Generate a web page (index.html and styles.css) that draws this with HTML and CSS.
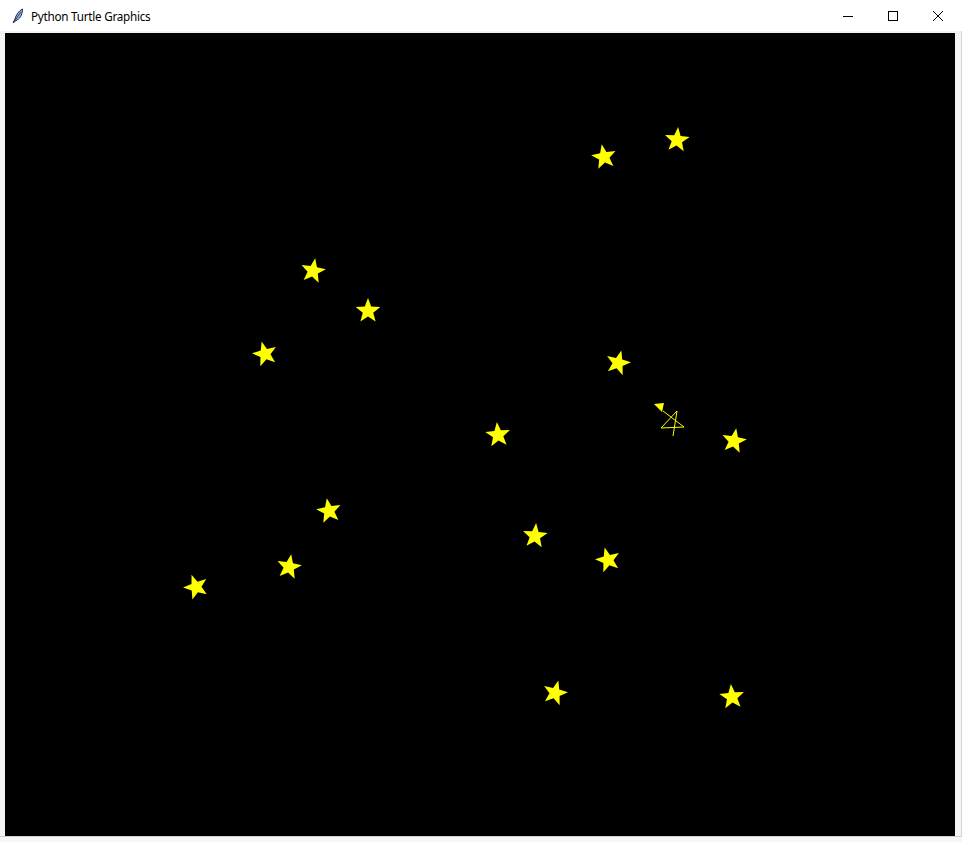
FILE: index.html
```html
<!DOCTYPE html>
<html>
<head>
<meta charset="utf-8">
<link rel="stylesheet" href="styles.css">
</head>
<body>
<div class="window">
  <div class="titlebar">
    <svg class="app-icon" width="12" height="16" viewBox="0 0 12 16">
      <path d="M1 15 L3 11 C4 7 6.5 3 10.5 1 C10.5 5 9 10 5 12 L2 14 Z" fill="#8fb4e0" stroke="#1b2a44" stroke-width="1"/>
      <path d="M1.5 14.5 L9 4" stroke="#1b2a44" stroke-width="0.8" fill="none"/>
    </svg>
    <span class="title">Python Turtle Graphics</span>
    <div class="controls">
      <div class="ctl">
        <svg width="12" height="12" viewBox="0 0 12 12"><path d="M1 6.5 H11" stroke="#000" stroke-width="1"/></svg>
      </div>
      <div class="ctl">
        <svg width="12" height="12" viewBox="0 0 12 12"><rect x="1.5" y="1.5" width="9" height="9" fill="none" stroke="#000" stroke-width="1"/></svg>
      </div>
      <div class="ctl">
        <svg width="12" height="12" viewBox="0 0 12 12"><path d="M1 1 L11 11 M11 1 L1 11" stroke="#000" stroke-width="1"/></svg>
      </div>
    </div>
  </div>
  <div class="client">
    <svg class="canvas" width="950" height="803" viewBox="5 33 950 803">
      <defs>
        <polygon id="star" points="0,-13 3.2,-4.4 12.36,-4.02 5.2,1.7 7.64,10.52 0,5.5 -7.64,10.52 -5.2,1.7 -12.36,-4.02 -3.2,-4.4" fill="#ffff00"/>
      </defs>
      <rect x="5" y="33" width="950" height="803" fill="#000"/>
      <use href="#star" transform="translate(604,157) rotate(-10)"/>
      <use href="#star" transform="translate(677,140) rotate(5)"/>
      <use href="#star" transform="translate(313,271) rotate(10)"/>
      <use href="#star" transform="translate(368,311) rotate(0)"/>
      <use href="#star" transform="translate(265,354) rotate(-15)"/>
      <use href="#star" transform="translate(618,363) rotate(15)"/>
      <use href="#star" transform="translate(498,435) rotate(-5)"/>
      <use href="#star" transform="translate(734,441) rotate(10)"/>
      <use href="#star" transform="translate(329,511) rotate(-10)"/>
      <use href="#star" transform="translate(535,536) rotate(5)"/>
      <use href="#star" transform="translate(608,560) rotate(-15)"/>
      <use href="#star" transform="translate(289,567) rotate(10)"/>
      <use href="#star" transform="translate(196,587) rotate(-20)"/>
      <use href="#star" transform="translate(555,693) rotate(15)"/>
      <use href="#star" transform="translate(732,697) rotate(-5)"/>
      <path d="M663 411 L684 427 L661 428 L677 411 L673 436" fill="none" stroke="#ffff00" stroke-width="1"/>
      <polygon points="654,404 664,403 662,412" fill="#ffff00"/>
    </svg>
  </div>
  <div class="bottom-strip"></div>
</div>
</body>
</html>
```
FILE: styles.css
```css
html, body {
  margin: 0;
  padding: 0;
  background: #ffffff;
}
body {
  width: 962px;
  height: 842px;
  overflow: hidden;
  font-family: "Noto Sans", "Open Sans", sans-serif;
}
.window {
  width: 962px;
  height: 842px;
  display: flex;
  flex-direction: column;
  background: #f0f0f0;
}
.titlebar {
  height: 31px;
  flex: none;
  display: flex;
  align-items: center;
  background: #ffffff;
  padding-left: 12px;
}
.app-icon {
  display: block;
  margin-right: 7px;
}
.title {
  font-size: 11.7px;
  color: #000;
  letter-spacing: -0.25px;
}
.controls {
  margin-left: auto;
  margin-right: 2px;
  display: flex;
}
.ctl {
  width: 45px;
  height: 31px;
  display: flex;
  align-items: center;
  justify-content: center;
}
.ctl svg {
  display: block;
}
.client {
  flex: none;
  height: 803px;
  width: 950px;
  padding: 2px 6px 0 5px;
  margin-left: -1px;
  margin-right: 1px;
  background: #f4f4f4;
  border-left: 1px solid #d6d6d6;
  border-right: 1px solid #d6d6d6;
}
.canvas {
  display: block;
}
.bottom-strip {
  flex: 1;
  background: #f7f7f7;
  border-top: 1px solid #d0d0d0;
}
```
